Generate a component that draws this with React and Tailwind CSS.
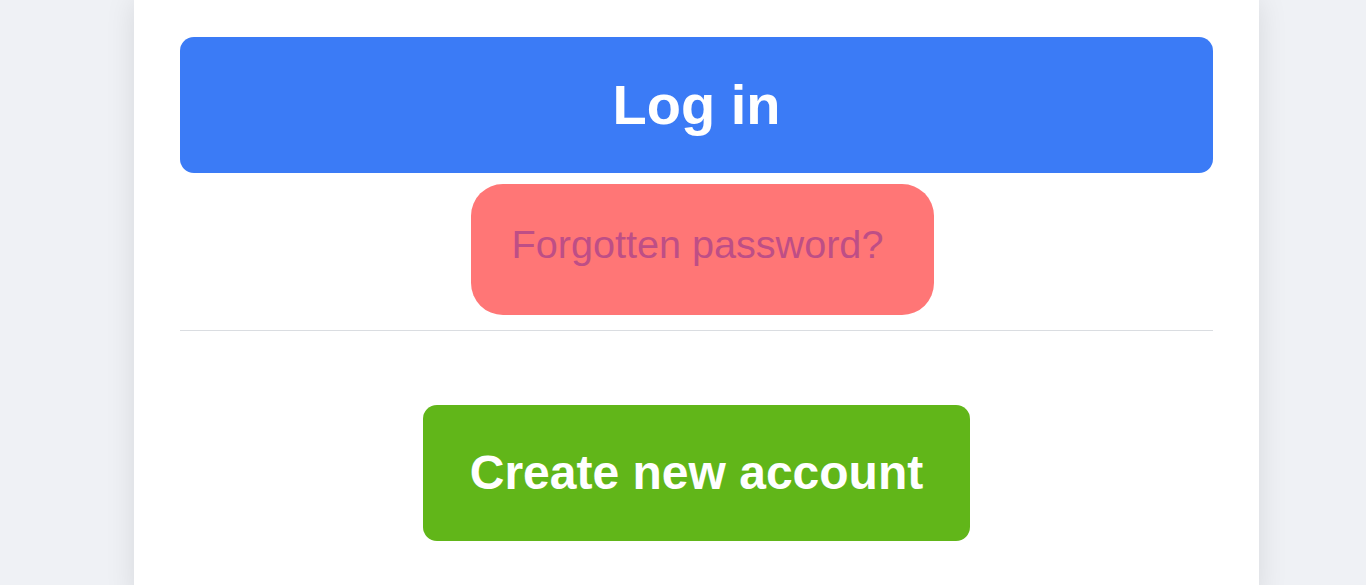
import React from 'react';

const App = () => {
  return (
    <div className="min-h-[585px] w-full overflow-hidden bg-[#eff1f5] font-['Liberation_Sans',Arial,sans-serif]">
      {/* Login card */}
      <div className="ml-[134px] w-[1125px] bg-white px-[46px] pt-[37px] pb-[60px] shadow-[0_0_28px_rgba(0,0,0,0.10)]">
        <button className="flex h-[136px] w-full items-center justify-center rounded-[14px] bg-[#3b7bf6] text-[56px] font-bold text-white">
          Log in
        </button>

        <div className="mt-[11px] flex justify-center pl-[12px]">
          <a className="flex h-[131px] w-[463px] items-center justify-center rounded-[32px] bg-[#ff7676] pb-[10px] pr-[10px] text-[39.6px] text-[#be4e86]">
            Forgotten password?
          </a>
        </div>

        <div className="mt-[15px] h-px w-full bg-[#dadde1]" />

        <div className="mt-[74px] flex justify-center">
          <button className="flex h-[136px] w-[547px] items-center justify-center rounded-[14px] bg-[#61b619] text-[48px] font-bold text-white">
            Create new account
          </button>
        </div>
      </div>
    </div>
  );
};

export default App;
